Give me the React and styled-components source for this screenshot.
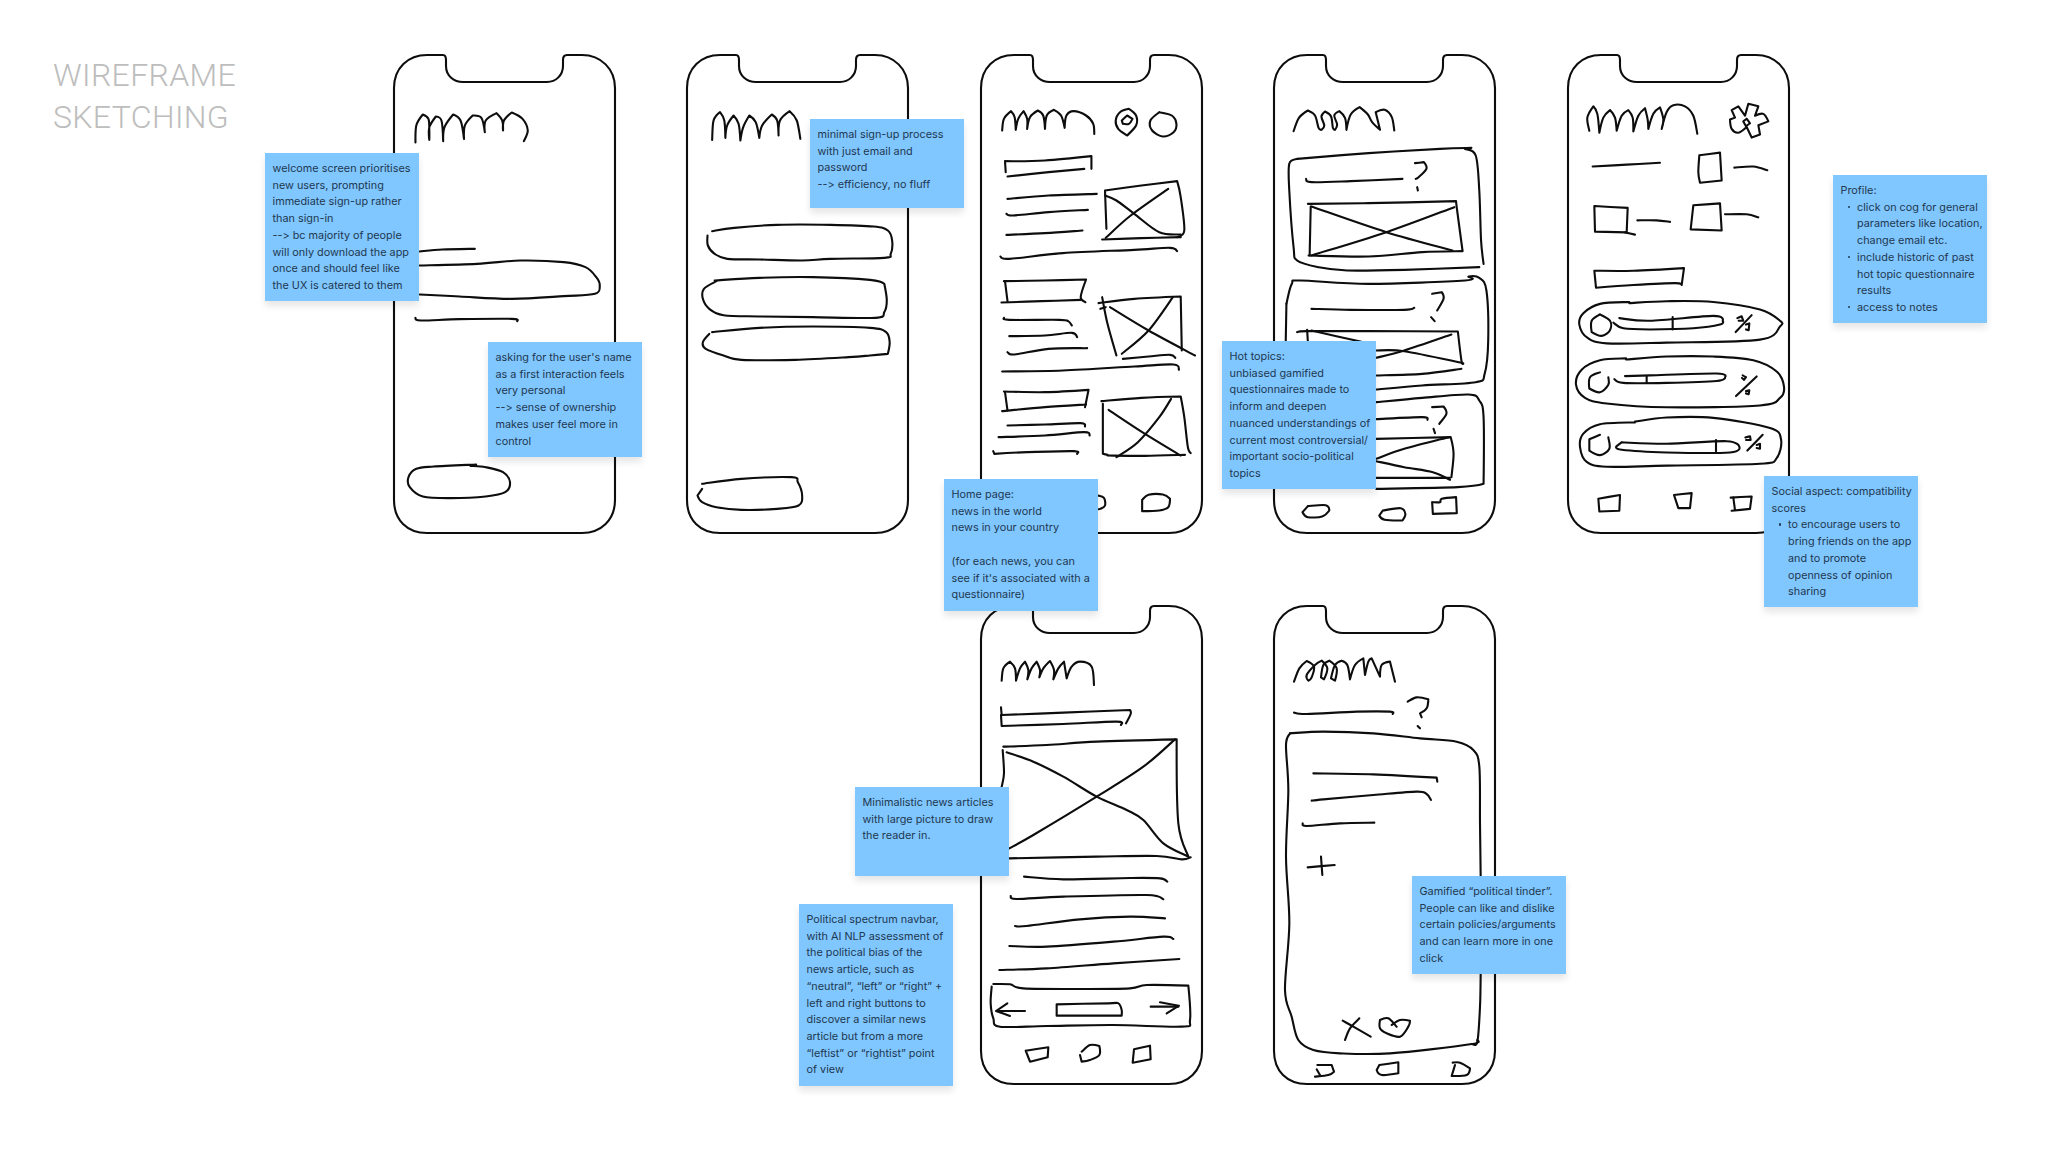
import React from "react";
import styled, { createGlobalStyle } from "styled-components";

const Global = createGlobalStyle`
  html, body { margin: 0; padding: 0; background: #fff; }
  #root { width: 2048px; height: 1152px; }
`;

const Board = styled.main`
  position: relative;
  width: 2048px;
  height: 1152px;
  overflow: hidden;
  background: #fff;
`;

const Title = styled.h1`
  position: absolute;
  left: 53px;
  top: 55px;
  margin: 0;
  font-family: "Roboto", "Liberation Sans", sans-serif;
  font-weight: 300;
  font-size: 32px;
  line-height: 41.7px;
  letter-spacing: 0.35px;
  color: #bdbdbd;
`;

const PhoneSvg = styled.svg`
  position: absolute;
  left: ${(p) => p.$x}px;
  top: ${(p) => p.$y}px;
  width: 224px;
  height: 482px;
  overflow: visible;
  path {
    fill: none;
    stroke: #0d0d0d;
    stroke-width: 2.1px;
    stroke-linecap: round;
    stroke-linejoin: round;
    vector-effect: non-scaling-stroke;
  }
`;

const Sticky = styled.div`
  position: absolute;
  left: ${(p) => p.$x}px;
  top: ${(p) => p.$y}px;
  width: ${(p) => p.$w || 154}px;
  height: ${(p) => p.$h}px;
  box-sizing: border-box;
  padding: 7px 0 0 7.5px;
  background: #80c6ff;
  box-shadow: 0 5px 7px rgba(0, 0, 0, 0.1);
  font-family: "Inter", "Noto Sans", sans-serif;
  font-size: 10.85px;
  font-variant-ligatures: none;
  font-feature-settings: "calt" 0, "liga" 0;
  line-height: 16.7px;
  color: #20384f;
  white-space: nowrap;
`;

const Bullets = styled.ul`
  list-style: none;
  margin: 0;
  padding: 0 0 0 ${(p) => p.$indent || 16.5}px;
`;

const Bullet = styled.li`
  position: relative;
  &::before {
    content: "";
    position: absolute;
    left: -9.5px;
    top: 7px;
    width: 2.4px;
    height: 2.4px;
    border-radius: 50%;
    background: #20384f;
  }
`;

const smooth = (s) => {
  const n = s.trim().split(/[\s,]+/).map(Number);
  const p = [];
  for (let i = 0; i < n.length; i += 2) p.push([n[i], n[i + 1]]);
  const corner = (i) => {
    const a = p[i - 1];
    const b = p[i];
    const c = p[i + 1];
    if (!a || !c) return false;
    const u = [b[0] - a[0], b[1] - a[1]];
    const v = [c[0] - b[0], c[1] - b[1]];
    const cos = (u[0] * v[0] + u[1] * v[1]) / (Math.hypot(...u) * Math.hypot(...v) || 1);
    return cos < 0.42;
  };
  let d = `M${p[0][0]} ${p[0][1]}`;
  const f = (v) => v.toFixed(1);
  for (let i = 0; i < p.length - 1; i++) {
    const a = p[i - 1] || p[i];
    const b = p[i];
    const c = p[i + 1];
    const e = p[i + 2] || c;
    const k1 = corner(i) ? 0 : 1 / 6;
    const k2 = corner(i + 1) ? 0 : 1 / 6;
    d += `C${f(b[0] + (c[0] - a[0]) * k1)} ${f(b[1] + (c[1] - a[1]) * k1)} ${f(c[0] - (e[0] - b[0]) * k2)} ${f(c[1] - (e[1] - b[1]) * k2)} ${f(c[0])} ${f(c[1])}`;
  }
  return d;
};

const OUTLINE =
  "M1 34C1 14 15 1 34 1L50 1Q53 1 53 6V12C53 22 61 28 70 28H154C163 28 170 21 170 12V6Q170 1 174 1H189C208 1 222 15 222 34V446C222 466 208 479 189 479H34C14 479 1 466 1 446Z";

const PHONES = [
  {
    x: 393, y: 53.5, t: [0, 30, 2.306, 3],
    s: [
      "958 336 960 285 975 252 988 265 990 300 990 328 990 290 1005 258 1018 270 1022 332 1025 290 1045 252 1062 270 1070 325 1072 285 1090 255 1110 262 1118 305 1120 270 1145 248 1158 270 1160 300 1162 270 1180 246 1205 265 1217 300 1208 332",
      "968 663 1020 657 1095 655",
      "968 705 1100 700 1200 690 1300 695 1350 710 1375 740 1383 765 1372 790 1300 797 1180 805 1060 798 968 792",
      "958 862 970 870 1060 866 1180 865 1193 872",
      "1098 1302 1000 1308 960 1315 942 1340 945 1370 975 1398 1040 1403 1120 1398 1165 1385 1176 1355 1160 1325 1120 1310 1085 1306",
    ],
  },
  {
    x: 686, y: 53.5, t: [670, 40, 2.8, 3],
    s: [
      "118 298 122 240 140 215 152 240 155 292 160 255 178 225 192 250 197 300 205 260 222 225 240 245 250 292 258 255 285 222 300 240 304 285 308 240 335 212 355 240 365 295",
      "118 572 180 562 300 553 450 553 570 558 610 570 622 600 618 640 600 652 450 655 370 660 250 657 160 655 125 640 106 615 105 585",
      "125 720 250 712 400 710 560 718 600 730 607 780 600 815 575 832 400 830 250 828 150 824 110 805 92 775 95 745 130 722",
      "118 875 250 862 400 858 560 862 605 875 615 905 610 940 560 945 500 950 350 958 200 958 150 945 100 925 92 905 110 880",
      "90 1330 200 1315 340 1310 358 1325 370 1365 360 1395 300 1405 200 1408 130 1400 90 1385 77 1365 90 1345",
    ],
  },
  {
    x: 980, y: 53.5, t: [670, 40, 2.8, 3],
    s: [
      "930 270 935 235 955 212 965 230 968 268 975 235 990 212 1000 235 1000 265 1008 230 1030 210 1045 225 1050 265 1055 225 1075 208 1095 225 1105 262 1110 225 1130 212 1165 225 1185 250 1188 280",
      "1280 285 1255 265 1248 240 1260 215 1285 205 1305 225 1305 255 1280 285",
      "1265 240 1280 225 1295 235 1285 250 1268 250 1265 240",
      "1370 215 1345 240 1350 270 1380 288 1410 275 1418 250 1405 225 1370 215",
      "940 395 938 362 1050 360 1180 347 1180 385",
      "945 408 1060 395 1160 385",
      "945 475 1060 465 1195 460",
      "942 520 960 525 1060 515 1170 508",
      "942 583 1050 578 1155 570",
      "1222 565 1218 450 1320 435 1420 422 1430 470 1440 570 1420 590",
      "1210 597 1320 593 1430 590",
      "1218 465 1250 480 1300 520 1370 575 1430 582",
      "1220 592 1290 525 1395 445",
      "925 648 950 655 1100 638 1300 628 1400 622 1420 632",
      "935 722 1050 720 1165 717 1150 770 1163 785",
      "938 722 945 782",
      "928 786 1040 782 1150 778",
      "935 832 950 838 1090 838 1115 842 1125 855",
      "950 887 1050 885 1125 877 1140 890",
      "945 935 965 942 1060 925 1168 923",
      "1200 788 1300 775 1430 768 1433 930",
      "1210 770 1225 850 1250 945",
      "1205 805 1220 800",
      "1232 800 1340 870 1470 945",
      "1265 940 1340 870 1408 770",
      "1268 955 1340 948 1400 943 1415 952",
      "930 993 1100 990 1300 978 1410 972 1425 988",
      "935 1053 1050 1055 1172 1048 1162 1100",
      "938 1055 945 1110",
      "930 1112 1050 1100 1165 1092",
      "945 1155 1050 1152 1150 1148 1162 1158",
      "920 1190 1050 1185 1160 1175 1175 1185",
      "905 1232 908 1240 1000 1235 1130 1232 1140 1240",
      "1208 1082 1320 1072 1430 1068 1440 1130 1450 1220 1458 1238",
      "1212 1090 1212 1240 1225 1243",
      "1225 1245 1330 1246 1442 1243",
      "1228 1108 1330 1180 1430 1245",
      "1250 1250 1310 1205 1370 1130 1403 1075",
      "1322 1378 1340 1363 1380 1362 1400 1375 1395 1400 1370 1410 1322 1412 1322 1378",
      "1197 1365 1215 1372 1218 1395 1205 1405 1197 1406",
    ],
  },
  {
    x: 1273, y: 53.5, t: [940, 40, 2.8, 3],
    s: [
      "990 272 1005 232 1030 210 1050 225 1060 262 1068 268 1076 255 1068 228 1078 213 1095 228 1100 262 1106 268 1112 252 1104 225 1118 212 1134 232 1138 268 1150 222 1175 200 1198 222 1210 245 1232 268 1220 215 1245 208 1265 230 1272 270",
      "1000 355 1200 338 1400 325 1488 322",
      "1000 355 978 370 978 450 990 620 1000 660 1060 680 1140 690 1300 688 1510 680",
      "1470 325 1500 345 1510 450 1515 600 1522 670",
      "1025 415 1040 425 1150 422 1295 415",
      "1330 368 1355 365 1362 385 1340 410 1332 415",
      "1336 440 1338 450",
      "1030 490 1200 488 1445 482 1448 510 1463 630",
      "1038 498 1035 645",
      "1032 645 1200 648 1350 635 1463 632",
      "1040 498 1250 575 1435 630",
      "1040 645 1250 575 1440 500",
      "970 790 985 730 1010 720 1200 730 1470 720 1480 708 1510 712 1530 750 1535 900 1525 1000 1500 1025 1350 1035 1221 1047",
      "970 790 968 905",
      "1040 805 1150 808 1300 808 1328 802",
      "1378 760 1405 755 1410 775 1392 810",
      "1375 830 1385 842",
      "1000 875 1028 872 1200 872 1450 873 1460 960 1465 970",
      "1028 868 1030 904",
      "1040 870 1180 904",
      "1221 930 1300 932 1465 968",
      "1221 952 1300 930 1432 882",
      "1221 1005 1350 1000 1460 985",
      "1221 1085 1350 1072 1480 1062 1510 1080 1522 1130 1522 1330 1450 1340 1221 1345",
      "1221 1136 1350 1130 1365 1138",
      "1378 1100 1410 1098 1418 1120 1398 1150",
      "1382 1165 1386 1178",
      "1221 1195 1430 1190 1438 1240 1432 1310",
      "1221 1312 1428 1312",
      "1221 1255 1300 1225 1425 1190",
      "1221 1262 1300 1280 1380 1295 1428 1318",
      "1030 1397 1080 1394 1090 1410 1070 1428 1030 1430 1015 1415 1030 1397",
      "1240 1410 1290 1403 1303 1420 1295 1440 1245 1438 1230 1425 1240 1410",
      "1378 1385 1400 1385 1405 1375 1445 1370 1447 1418 1380 1420 1378 1385",
    ],
  },
  {
    x: 1567, y: 53.5, t: [1500, 40, 3, 2.658],
    s: [
      "268 240 262 205 280 175 292 195 298 245 310 205 330 185 345 205 350 240 365 200 385 185 398 205 400 242 415 200 435 180 443 210 445 235 460 195 480 178 490 210 485 235 500 190 520 172 555 175 580 200 592 248",
      "735 200 715 175 695 185 705 205 690 210 695 235 715 245 740 230 755 258 780 250 775 225 805 215 790 195 765 200 775 175 745 168 735 200",
      "740 208 730 215 738 228 750 220 740 208",
      "278 335 380 330 480 325",
      "598 305 660 298 665 372 600 378 595 350 598 305",
      "703 338 760 335 802 345",
      "283 440 383 445 380 510 285 508 283 440",
      "375 510 405 516",
      "412 478 470 478 510 482",
      "580 438 660 433 665 505 572 502 580 438",
      "675 462 740 462 775 470",
      "283 612 400 612 552 605 545 650 525 645 400 650 288 657 283 612",
      "388 695 300 700 250 725 238 755 262 790 320 805 500 803 780 795 840 760 840 745 780 715 640 695 500 693 388 698",
      "300 728 275 745 275 775 305 785 330 770 330 745 300 728",
      "358 738 450 745 640 732 668 745 660 755 580 765 450 768 370 765 340 750",
      "518 735 518 768",
      "707 775 755 730",
      "712 738 725 733 730 745 716 745",
      "738 755 748 752 746 770 738 768",
      "378 845 300 850 245 875 228 915 255 950 320 965 500 975 780 970 840 950 852 920 830 880 760 850 640 840 500 840 378 848",
      "300 882 270 895 268 925 300 935 325 915 325 895",
      "375 892 450 890 650 885 675 895 650 905 500 910 370 910 343 900",
      "440 892 440 910",
      "708 945 770 893",
      "728 890 738 895 732 902 726 897",
      "738 932 748 930 746 940 738 938",
      "405 1015 300 1020 250 1045 240 1080 260 1120 320 1133 500 1130 780 1125 830 1110 843 1060 810 1030 640 1003 500 1002 405 1013",
      "300 1048 268 1060 268 1090 300 1102 328 1085 325 1055",
      "365 1068 500 1072 680 1065 718 1080 690 1095 500 1095 365 1088 350 1078 365 1068",
      "648 1062 648 1092",
      "742 1090 788 1048",
      "736 1055 750 1052 752 1062 738 1062",
      "770 1075 780 1072 780 1085 770 1083",
      "295 1218 360 1208 358 1250 298 1252 295 1218",
      "522 1208 575 1203 570 1243 535 1243 522 1208",
      "692 1215 755 1212 750 1245 695 1250",
      "700 1215 705 1248",
    ],
  },
  {
    x: 980, y: 605, t: [780, 590, 3, 3],
    s: [
      "665 272 670 235 690 215 705 235 708 272 720 235 735 215 745 240 742 268 755 235 770 215 780 240 778 262 790 235 810 213 822 240 820 268 835 235 852 215 860 265 875 230 900 215 935 230 942 285",
      "663 352 665 375 850 368 1050 360 1052 372 1038 400",
      "663 375 665 408 850 402 1010 395 1023 405",
      "670 470 800 465 950 455 1190 448 1195 700 1225 800",
      "668 480 672 550 665 590",
      "680 487 760 515 850 560 950 620 1040 660 1090 690 1150 760 1225 800",
      "688 775 760 735 950 620 1090 530 1185 448",
      "688 805 950 800 1130 798 1205 808 1232 802",
      "732 860 850 868 1050 864 1140 865 1162 875",
      "692 918 710 927 850 920 1100 915 1150 928",
      "705 1008 740 1008 900 988 1050 980 1155 985",
      "688 1068 800 1070 1000 1055 1150 1040 1180 1047",
      "658 1140 800 1135 1000 1120 1198 1107",
      "640 1182 690 1183 730 1195 900 1197 1050 1195 1100 1185 1225 1187 1230 1290 1205 1310 1000 1305 800 1308 660 1310 640 1285 632 1240 635 1190",
      "830 1243 985 1240 1015 1240 1025 1260 1025 1277 830 1277 830 1243",
      "735 1263 650 1263",
      "682 1240 648 1263 690 1278",
      "1112 1250 1195 1250",
      "1140 1237 1197 1247 1160 1270",
      "737 1382 805 1372 803 1402 750 1415 737 1382",
      "905 1385 930 1365 958 1368 958 1395 930 1410 905 1415 900 1395",
      "1062 1378 1110 1367 1112 1408 1058 1418 1062 1378",
    ],
  },
  {
    x: 1273, y: 605, t: [1240, 590, 3, 3],
    s: [
      "162 275 178 235 200 213 222 230 215 262 205 272 200 255 225 225 245 212 262 235 252 268 243 262 250 225 268 212 290 235 285 272 273 265 285 225 305 212 322 225 330 268 345 225 370 205 375 255 385 215 395 205 420 260 425 225 450 215 465 275",
      "162 368 200 372 350 365 450 365 458 372",
      "503 335 530 322 565 328 560 355 540 370 545 382",
      "533 408 540 415",
      "150 430 250 425 400 430 540 445 650 455 700 480 718 530 720 700 722 858",
      "150 430 138 465 145 600 138 800 148 1000 135 1200 155 1280 175 1350 220 1380 300 1390 450 1390 690 1363 712 1350",
      "722 1152 720 1250 712 1355 695 1362",
      "220 550 400 553 590 563 592 575",
      "215 632 250 628 400 615 530 605 560 612 573 630",
      "188 700 200 708 300 700 403 698",
      "203 832 284 825",
      "243 800 247 855",
      "308 1292 340 1310 392 1340",
      "315 1350 330 1315 358 1285",
      "470 1310 445 1285 420 1290 420 1315 440 1330 480 1340 505 1310 510 1292 480 1290 455 1305",
      "232 1425 275 1425 282 1445 265 1455 225 1460",
      "230 1438 240 1455",
      "418 1425 475 1417 475 1450 425 1455 410 1440 418 1425",
      "638 1418 660 1418 690 1435 680 1455 635 1458 645 1425",
    ],
  },
];

const Phone = ({ x, y, t, s }) => (
  <PhoneSvg $x={x} $y={y} viewBox={`${x} ${y} 224 482`}>
    <path transform={`translate(${x} ${y})`} d={OUTLINE} />
    <g transform={`translate(${t[0]} ${t[1]}) scale(${1 / t[2]} ${1 / t[3]})`}>
      {s.map((stroke, i) => (
        <path key={i} d={smooth(stroke)} />
      ))}
    </g>
  </PhoneSvg>
);

export default function App() {
  return (
    <Board>
      <Global />
      <Title>
        WIREFRAME
        <br />
        SKETCHING
      </Title>
      {PHONES.map((p, i) => (
        <Phone key={i} {...p} />
      ))}

      <Sticky $x={265} $y={153} $h={148}>
        welcome screen prioritises<br />
        new users, prompting<br />
        immediate sign-up rather<br />
        than sign-in<br />
        --&gt; bc majority of people<br />
        will only download the app<br />
        once and should feel like<br />
        the UX is catered to them
      </Sticky>
      <Sticky $x={488} $y={342} $h={115}>
        asking for the user's name<br />
        as a first interaction feels<br />
        very personal<br />
        --&gt; sense of ownership<br />
        makes user feel more in<br />
        control
      </Sticky>
      <Sticky $x={810} $y={119} $h={89}>
        minimal sign-up process<br />
        with just email and<br />
        password<br />
        --&gt; efficiency, no fluff
      </Sticky>
      <Sticky $x={944} $y={479} $h={132}>
        Home page:<br />
        news in the world<br />
        news in your country<br />
        <br />
        (for each news, you can<br />
        see if it's associated with a<br />
        questionnaire)
      </Sticky>
      <Sticky $x={1222} $y={341} $h={148}>
        Hot topics:<br />
        unbiased gamified<br />
        questionnaires made to<br />
        inform and deepen<br />
        nuanced understandings of<br />
        current most controversial/<br />
        important socio-political<br />
        topics
      </Sticky>
      <Sticky $x={1833} $y={175} $h={148}>
        Profile:
        <Bullets>
          <Bullet>click on cog for general<br />parameters like location,<br />change email etc.</Bullet>
          <Bullet>include historic of past<br />hot topic questionnaire<br />results</Bullet>
          <Bullet>access to notes</Bullet>
        </Bullets>
      </Sticky>
      <Sticky $x={1764} $y={476} $h={131}>
        Social aspect: compatibility<br />
        scores
        <Bullets>
          <Bullet>to encourage users to<br />bring friends on the app<br />and to promote<br />openness of opinion<br />sharing</Bullet>
        </Bullets>
      </Sticky>
      <Sticky $x={855} $y={787} $h={89}>
        Minimalistic news articles<br />
        with large picture to draw<br />
        the reader in.
      </Sticky>
      <Sticky $x={799} $y={904} $h={182}>
        Political spectrum navbar,<br />
        with AI NLP assessment of<br />
        the political bias of the<br />
        news article, such as<br />
        “neutral”, “left” or “right” +<br />
        left and right buttons to<br />
        discover a similar news<br />
        article but from a more<br />
        “leftist” or “rightist” point<br />
        of view
      </Sticky>
      <Sticky $x={1412} $y={876} $h={98}>
        Gamified “political tinder”.<br />
        People can like and dislike<br />
        certain policies/arguments<br />
        and can learn more in one<br />
        click
      </Sticky>
    </Board>
  );
}
